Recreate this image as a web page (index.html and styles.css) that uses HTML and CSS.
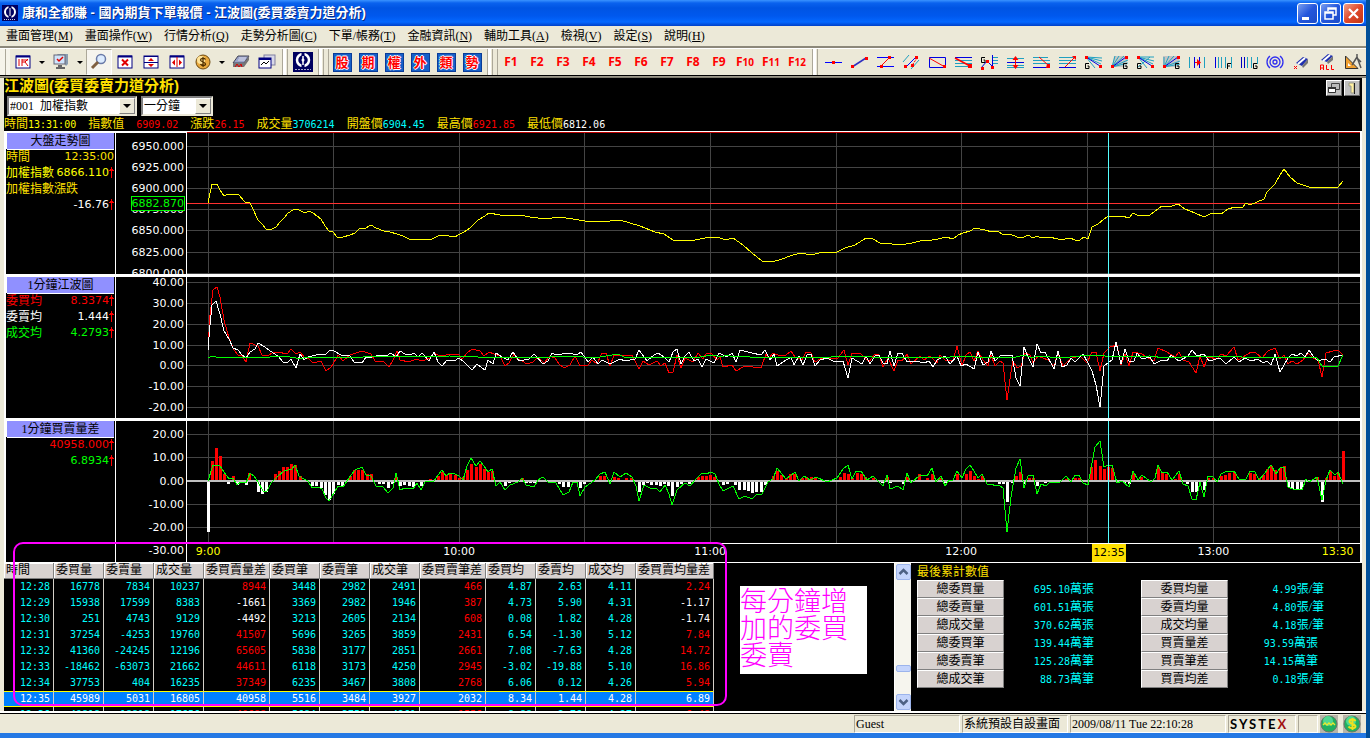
FILE: index.html
```html
<!DOCTYPE html>
<html lang="zh-Hant">
<head>
    <meta charset="UTF-8">
    <meta name="viewport" content="width=device-width, initial-scale=1.0">
    <title>康和全都賺 - 國內期貨下單報價</title>
    <link rel="stylesheet" href="styles.css">
</head>
<body>

<div class="window">
    <header class="titlebar">
        <svg class="app-icon" width="16" height="16" viewBox="0 0 16 16"><rect width="16" height="16" fill="#000060"/><circle cx="8" cy="7" r="5" fill="none" stroke="#fff" stroke-width="2"/><path d="M8 0v4M8 10v3" stroke="#000060" stroke-width="3"/><path d="M8 3v4M8 7v4" stroke="#fff"/><path d="M2 14.5h12" stroke="#ccd" stroke-dasharray="1 1"/></svg>
        <h1>康和全都賺 - 國內期貨下單報價 - 江波圖(委買委賣力道分析)</h1>
        <div class="window-buttons">
            <button aria-label="最小化"><svg width="19" height="19" viewBox="0 0 19 19"><path d="M4 14.5h7" stroke="#fff" stroke-width="3"/></svg></button>
            <button aria-label="還原"><svg width="19" height="19" viewBox="0 0 19 19"><path d="M7 7V4h8v7h-3M7 5h8M4 8h8v7H4zM4 9h8" fill="none" stroke="#fff" stroke-width="1.5"/></svg></button>
            <button class="close" aria-label="關閉"><svg width="19" height="19" viewBox="0 0 19 19"><path d="M5 5l9 9M14 5l-9 9" stroke="#fff" stroke-width="2.2"/></svg></button>
        </div>
    </header>

    <nav class="menu">
        <a href="#">畫面管理(<u>M</u>)</a>
        <a href="#">畫面操作(<u>W</u>)</a>
        <a href="#">行情分析(<u>Q</u>)</a>
        <a href="#">走勢分析圖(<u>C</u>)</a>
        <a href="#">下單/帳務(<u>T</u>)</a>
        <a href="#">金融資訊(<u>N</u>)</a>
        <a href="#">輔助工具(<u>A</u>)</a>
        <a href="#">檢視(<u>V</u>)</a>
        <a href="#">設定(<u>S</u>)</a>
        <a href="#">說明(<u>H</u>)</a>
    </nav>

    <div class="toolbar">
        <span class="grip slim first"></span>
        <button class="tool" aria-label="版面"><svg width="18" height="18" viewBox="0 0 18 18"><rect x="2" y="3" width="14" height="12" fill="#fff" stroke="#000080"/><path d="M2 3.5h14" stroke="#000080" stroke-width="2"/><path d="M5 6v7M8 6v7M8 9h3l3 4M11 9l3-3M8 7h6" stroke="#e00000" fill="none"/></svg></button>
        <button class="arrow" aria-label="版面選單"></button>
        <button class="tool" aria-label="電腦"><svg width="18" height="18" viewBox="0 0 18 18"><path d="M5 1h11v10l-2 2z" fill="#8a9cb0"/><rect x="2" y="2" width="11" height="9" fill="#cfe4fb" stroke="#667"/><path d="M5 6l2 2 4-4" stroke="#e00000" fill="none" stroke-width="1.5"/><path d="M6 12h4v2h3v2H4v-2h2z" fill="#666"/></svg></button>
        <button class="arrow" aria-label="電腦選單"></button>
        <button class="tool pressed" aria-label="查詢"><svg width="18" height="18" viewBox="0 0 18 18"><circle cx="11" cy="6" r="4.5" fill="#dcebff" stroke="#6a7aa8" stroke-width="1.5"/><path d="M8 9l-6 6" stroke="#806040" stroke-width="3"/></svg></button>
        <button class="tool" aria-label="關閉畫面"><svg width="18" height="18" viewBox="0 0 18 18"><rect x="2" y="3" width="14" height="12" fill="#fff" stroke="#000080"/><path d="M2 3.5h14" stroke="#000080" stroke-width="2"/><path d="M6 6.5l6 6M12 6.5l-6 6" stroke="#e00000" stroke-width="2"/></svg></button>
        <button class="tool" aria-label="水平分割"><svg width="18" height="18" viewBox="0 0 18 18"><rect x="2" y="3" width="14" height="12" fill="#fff" stroke="#000080"/><path d="M2 3.5h14M2 9.5h14" stroke="#000080"/><path d="M9 5l3 3H6zM9 14l3-3H6z" fill="#e00000"/></svg></button>
        <button class="tool" aria-label="垂直分割"><svg width="18" height="18" viewBox="0 0 18 18"><rect x="2" y="3" width="14" height="12" fill="#fff" stroke="#000080"/><path d="M2 3.5h14" stroke="#000080" stroke-width="2"/><path d="M9 4v10" stroke="#e00000"/><path d="M4 9.5l3-3v6zM14 9.5l-3-3v6z" fill="#e00000"/></svg></button>
        <button class="tool" aria-label="帳務"><svg width="18" height="18" viewBox="0 0 18 18"><circle cx="9" cy="9" r="7" fill="#e8a83c" stroke="#6e4a10"/><circle cx="7" cy="7" r="4" fill="#ffe49a"/><path d="M11.5 6.5c-1-1.5-5-1.5-5 .5s5 2 5 4-4 2-5 0M9 4v10" stroke="#503000" fill="none" stroke-width="1.3"/></svg></button>
        <button class="arrow" aria-label="帳務選單"></button>
        <button class="tool" aria-label="列印"><svg width="18" height="18" viewBox="0 0 18 18"><path d="M6 3h11l-5 7H1z" fill="#9aa4c8" stroke="#445"/><path d="M1 10h11l5-7v4l-5 7H1z" fill="#777"/><path d="M7 5h7M6 7h7" stroke="#dde"/><path d="M3 14l2-3 2 3 2-3 1 3" stroke="#e00000" fill="none"/></svg></button>
        <button class="tool" aria-label="走勢視窗"><svg width="18" height="18" viewBox="0 0 18 18"><rect x="6" y="2" width="11" height="10" fill="#d8d8e8" stroke="#8080a0"/><rect x="1" y="5" width="12" height="10" fill="#fff" stroke="#000080"/><path d="M1 6h12" stroke="#000080" stroke-width="2"/><path d="M3 12l3-3 2 2 3-3" stroke="#000" fill="none"/></svg></button>

        <span class="grip slim"></span>
        <button class="tool" aria-label="康和"><svg width="20" height="20" viewBox="0 0 20 20"><rect width="20" height="20" fill="#000060"/><circle cx="10" cy="8" r="6" fill="none" stroke="#fff" stroke-width="2.5"/><path d="M10 0v4M10 12v4" stroke="#000060" stroke-width="3"/><path d="M10 4v3M10 9v4" stroke="#fff" stroke-width="1.5"/><circle cx="10" cy="8" r="1.5" fill="#fff"/><path d="M2 17.5h16" stroke="#aac" stroke-dasharray="2 1"/></svg></button>

        <span class="grip"></span>
        <button class="tool word"><span>股</span></button>
        <button class="tool word"><span>期</span></button>
        <button class="tool word"><span>權</span></button>
        <button class="tool word"><span>外</span></button>
        <button class="tool word"><span>類</span></button>
        <button class="tool word"><span>勢</span></button>

        <span class="grip"></span>
        <button class="tool fkey">F1</button>
        <button class="tool fkey">F2</button>
        <button class="tool fkey">F3</button>
        <button class="tool fkey">F4</button>
        <button class="tool fkey">F5</button>
        <button class="tool fkey">F6</button>
        <button class="tool fkey">F7</button>
        <button class="tool fkey">F8</button>
        <button class="tool fkey">F9</button>
        <button class="tool fkey">F<small>10</small></button>
        <button class="tool fkey">F<small>11</small></button>
        <button class="tool fkey">F<small>12</small></button>

        <span class="grip slim"></span>
        <button class="tool" aria-label="水平線"><svg width="18" height="18" viewBox="0 0 18 18"><path d="M1 9.5h17" stroke="#0000ff"/><path d="M8 8h3v3H8z" fill="#f00"/></svg></button>
        <button class="tool" aria-label="趨勢線"><svg width="18" height="18" viewBox="0 0 18 18"><path d="M2 14L16 5" stroke="#3030c0" stroke-width="1.5"/><path d="M1 12h3v3H1zM15 4h3v3h-3z" fill="#f00"/></svg></button>
        <button class="tool" aria-label="通道線"><svg width="18" height="18" viewBox="0 0 18 18"><path d="M1 4.5h17M1 13.5h17" stroke="#0000ff"/><path d="M5 13L13 5" stroke="#f00"/><path d="M4 12h3v3H4zM12 3h3v3h-3z" fill="#f00"/></svg></button>
        <button class="tool" aria-label="平行線"><svg width="18" height="18" viewBox="0 0 18 18"><path d="M1 9l6-7M9 16l8-9" stroke="#20a0c0"/><path d="M4 14L14 4" stroke="#0000ff"/><path d="M9 14l6-9" stroke="#f00" stroke-dasharray="2 1"/><path d="M2 12h3v3H2zM13 3h3v3h-3zM9 11h3v3H9z" fill="#f00"/></svg></button>
        <button class="tool" aria-label="矩形"><svg width="18" height="18" viewBox="0 0 18 18"><path d="M1.5 4.5h16v10h-16z" fill="none" stroke="#0000e0"/><path d="M1 5l16 9" stroke="#f00"/><path d="M15 12h3v3h-3z" fill="#f00"/></svg></button>
        <button class="tool" aria-label="黃金分割"><svg width="18" height="18" viewBox="0 0 18 18"><path d="M1 4.5h17" stroke="#0000e0"/><path d="M1 7.5h17M1 10.5h17M1 13.5h17" stroke="#20a0c0"/><path d="M1 5l15 8" stroke="#f00" stroke-width="1.5"/><path d="M14 11h4v4h-4z" fill="#f00"/></svg></button>
        <button class="tool" aria-label="甘氏線"><svg width="18" height="18" viewBox="0 0 18 18"><path d="M12 4.5h6M12 7.5h6M12 10.5h6" stroke="#20a0c0"/><path d="M12.5 2v12M1 15l6-7 6 6" stroke="#0000e0" fill="none"/><path d="M5 4.500H1.500v5H5V7H3.500" stroke="#000" fill="none"/><path d="M1 14h3v3H1zM6 7h3v3H6zM11 13h3v3h-3z" fill="#f00"/></svg></button>
        <button class="tool" aria-label="等分線"><svg width="18" height="18" viewBox="0 0 18 18"><path d="M1 5.5h17M1 12.5h17M1 14.5h17" stroke="#20a0c0"/><path d="M1 9.5h17" stroke="#0000e0"/><path d="M9.5 5v9" stroke="#f00"/><path d="M9.5 3l3 4h-6zM9.5 16l3-4h-6z" fill="#f00"/></svg></button>
        <button class="tool" aria-label="下降線"><svg width="18" height="18" viewBox="0 0 18 18"><path d="M1 4.5h15M1 7.5h17M1 10.5h17" stroke="#20a0c0"/><path d="M1 14.5h17" stroke="#0000e0"/><path d="M7 4l9 8" stroke="#f00"/><path d="M15 11h3v4h-4z" fill="#f00"/></svg></button>
        <button class="tool" aria-label="上升線"><svg width="18" height="18" viewBox="0 0 18 18"><path d="M1 4.5h15M1 7.5h17M1 10.5h17" stroke="#20a0c0"/><path d="M1 14.5h17" stroke="#0000e0"/><path d="M7 14l9-9" stroke="#f00"/><path d="M14 3h4v4z" fill="#f00"/></svg></button>
        <button class="tool" aria-label="扇形線一"><svg width="18" height="18" viewBox="0 0 18 18"><path d="M2 4l16 1M2 4l16 4M2 4l15 7M2 4l9 11" stroke="#20a0c0"/><path d="M2 4l14 9" stroke="#0000e0"/><path d="M1 3h3v3H1zM15 12h3v3h-3z" fill="#f00"/><path d="M5 10.5H1.500v5H5V13H3.500" stroke="#000" fill="none"/></svg></button>
        <button class="tool" aria-label="扇形線二"><svg width="18" height="18" viewBox="0 0 18 18"><path d="M4 3h13v11H2z" fill="#c4c8c4"/><path d="M2 14l3-11M2 14L9 3M2 14L14 3M2 14l16-4M2 14l16-7" stroke="#20a0c0"/><path d="M2 14L16 4" stroke="#0000e0"/><path d="M1 12h3v3H1zM15 3h3v3h-3z" fill="#f00"/><path d="M17 10.5h-3.500v5H17V13h-2" stroke="#000" fill="none"/></svg></button>
        <button class="tool" aria-label="扇形線三"><svg width="18" height="18" viewBox="0 0 18 18"><path d="M2 4h16M2 4l16 4M2 4l15 7M2 4l9 11M2 14L14 4" stroke="#20a0c0"/><path d="M2 4l14 9" stroke="#0000e0"/><path d="M1 3h3v3H1zM15 12h3v3h-3z" fill="#f00"/><path d="M5 10.5H1.500v5H5V13H3.500" stroke="#000" fill="none"/></svg></button>
        <button class="tool" aria-label="扇形線四"><svg width="18" height="18" viewBox="0 0 18 18"><path d="M1 3h16v11H1z" fill="#c4c4c4"/><path d="M2 14V4M2 14L7 3M2 14L12 3M2 14l16-3M2 14l16-6" stroke="#20a0c0"/><path d="M2 14L16 4" stroke="#0000e0"/><path d="M1 12h3v3H1zM15 3h3v3h-3z" fill="#f00"/><path d="M17 10.5h-3.500v5H17V13h-2" stroke="#000" fill="none"/></svg></button>
        <button class="tool" aria-label="週期線"><svg width="18" height="18" viewBox="0 0 18 18"><path d="M1.5 4v11M16.5 4v11" stroke="#20a0c0"/><path d="M6.5 4v11M11.5 4v11" stroke="#0000e0"/><path d="M7 9.5h5" stroke="#f00"/><path d="M9 6l4 3.500-4 3.500z" fill="#f00"/></svg></button>
        <button class="tool" aria-label="費氏週期"><svg width="18" height="18" viewBox="0 0 18 18"><path d="M1.5 4v11" stroke="#0000e0"/><path d="M4.5 4v11M7.5 4v11M11.5 4v11M17.5 4v11" stroke="#20a0c0"/><path d="M13.5 16v-5.500H17M13.5 13H16" stroke="#000" fill="none"/></svg></button>
        <button class="tool" aria-label="甘氏週期"><svg width="18" height="18" viewBox="0 0 18 18"><path d="M1.5 4v11M4.5 4v11" stroke="#0000c0"/><path d="M7.5 4v11M11.5 4v11M17.5 4v7" stroke="#20a0c0"/><path d="M17 10.5h-3.500v5H17V13h-2" stroke="#000" fill="none"/></svg></button>
        <button class="tool" aria-label="圓弧"><svg width="18" height="18" viewBox="0 0 18 18"><g fill="none" stroke="#3030f0" stroke-width="1.3"><circle cx="9" cy="9" r="2"/><circle cx="9" cy="9" r="5"/><path d="M4 3c-4 3-4 9 0 12M14 3c4 3 4 9 0 12"/></g></svg></button>
        <button class="tool" aria-label="刪除線"><svg width="18" height="18" viewBox="0 0 18 18"><path d="M4 10l7-6 5 2-6 7z" fill="#2030b0"/><path d="M6 11l7-6" stroke="#fff" stroke-width="2"/><path d="M10 13l6-7v4l-5 5z" fill="#777"/><path d="M2 13l3 3M5 13l-3 3" stroke="#f00"/></svg></button>
        <button class="tool" aria-label="全部刪除"><svg width="18" height="18" viewBox="0 0 18 18"><path d="M3 7l7-6 5 2-6 6z" fill="#2030b0"/><path d="M5 8l7-6" stroke="#fff" stroke-width="2"/><path d="M9 9l6-6v4l-5 4z" fill="#777"/><path d="M2.5 17v-5h3v5M2.5 15h3M8.5 12v4.500H11M13.5 12v4.500H16" stroke="#f00" fill="none"/></svg></button>
        <button class="tool" aria-label="繪圖工具"><svg width="18" height="18" viewBox="0 0 18 18"><path d="M1.5 3v12.500H14z" fill="#f0a030" stroke="#333"/><path d="M4 10v3h3z" fill="#fff"/><path d="M8 12l5-8 4 11M13 4V1M17 9l-4-4" stroke="#555" fill="none" stroke-width="1.5"/></svg></button>
    </div>

    <main class="analysis">
        <section class="panel-head">
            <div class="panel-title">
                <h2>江波圖(委買委賣力道分析)</h2>
                <div class="panel-buttons">
                    <button aria-label="視窗"><svg width="14" height="14" viewBox="0 0 14 14"><path d="M4.500 2.500h8v6h-8z" fill="#bbb" stroke="#444"/><path d="M1.500 6.500h7v5h-7z" fill="#fff" stroke="#333"/><path d="M1 7h8" stroke="#333" stroke-width="2"/></svg></button>
                    <button aria-label="頁籤"><svg width="14" height="14" viewBox="0 0 14 14"><path d="M4 2h5v10H6V5H4z" fill="#fff0a0" stroke="#998"/><path d="M9.5 2v11" stroke="#222"/></svg></button>
                </div>
            </div>
            <div class="filters">
                <label class="combo symbol">
                    <select aria-label="商品"><option>#001&nbsp; 加權指數</option></select>
                    <span class="combo-arrow"></span>
                </label>
                <label class="combo period">
                    <select aria-label="週期"><option>一分鐘</option></select>
                    <span class="combo-arrow"></span>
                </label>
            </div>
            <div class="quote">
                <span>時間<b class="yellow">13:31:00</b></span>
                <span>指數值</span>
                <span><b class="red">6909.02</b></span>
                <span>漲跌<b class="red">26.15</b></span>
                <span>成交量<b class="cyan">3706214</b></span>
                <span>開盤價<b class="cyan">6904.45</b></span>
                <span>最高價<b class="red">6921.85</b></span>
                <span>最低價<b class="white">6812.06</b></span>
            </div>
        </section>

        <section class="charts">
            <div class="chart">
                <div class="legend">
                    <h3>大盤走勢圖</h3>
                    <p class="gold"><span>時間</span><b>12:35:00</b></p>
                    <p class="yellow"><span>加權指數</span><b>6866.110<i class="up"></i></b></p>
                    <p class="gold"><span>加權指數漲跌</span></p>
                    <p class="white"><b>-16.76<i class="up"></i></b></p>
                </div>
                <svg class="scale" width="70" height="141">
                    <text x="68" y="17">6950.000</text>
                    <text x="68" y="38">6925.000</text>
                    <text x="68" y="59">6900.000</text>
                    <text x="68" y="80">6875.000</text>
                    <text x="68" y="101">6850.000</text>
                    <text x="68" y="123">6825.000</text>
                    <text x="68" y="144">6800.000</text>
                    <rect x="15.5" y="63.5" width="53" height="14" fill="#000" stroke="#0f0"/>
                    <text x="68" y="74" class="current">6882.870</text>
                </svg>
                <svg class="plot" viewBox="187 133 1173 141" preserveAspectRatio="none">
                    <path class="grid" d="M187 146.5H1360M187 167.5H1360M187 188.5H1360M187 209.5H1360M187 230.5H1360M187 252.5H1360M187 273.5H1360M208.5 133V274M333.5 133V274M459.5 133V274M584.5 133V274M710.5 133V274M836.5 133V274M961.5 133V274M1087.5 133V274M1213.5 133V274M1338.5 133V274"/>
                    <path stroke="#ff3030" d="M187 203.5H1360"/>
                    <polyline stroke="#ffff00" points="208,203 212,184 217,184 220,190 224,196 228,194 238,194 245,202 250,203 253,209 258,220 262,224 266,229 272,229 276,227 280,222 285,217 288,213 293,210 297,209 301,211 305,213 309,211 313,213 317,216 321,219 325,226 329,231 333,232 337,237 343,237 350,235 355,233 359,229 366,228 371,225 376,228 384,231 390,232 397,234 403,236 409,239 421,240 432,239 438,236 442,235 455,237 460,234 464,232 470,228 478,220 485,216 489,213 500,215 520,215 530,217 545,219 560,217 585,221 600,222 620,220 640,226 655,232 664,234 673,240 690,241 700,239 710,237 718,237 725,240 733,238 743,245 752,253 762,261 772,262 782,259 790,256 800,253 812,255 822,252 835,253 845,248 855,245 866,238 873,239 880,243 892,244 900,245 912,243 920,241 932,240 938,239 946,237 953,239 958,235 963,233 970,231 975,228 985,230 992,232 998,231 1003,235 1010,234 1017,237 1024,237 1028,235 1033,238 1037,236 1041,238 1049,237 1058,239 1065,239 1070,238 1075,240 1080,240 1084,237 1088,239 1092,227 1098,224 1104,219 1109,216 1122,216 1129,218 1133,213 1137,215 1150,215 1155,211 1162,206 1172,206 1178,204 1185,209 1195,213 1204,217 1212,213 1221,214 1228,209 1235,207 1242,208 1246,203 1250,205 1257,202 1264,199 1267,192 1275,184 1280,175 1284,169 1290,177 1297,183 1309,187 1338,187 1343,181"/>
                    <path class="cursor" d="M1108.5 133V274"/>
                </svg>
            </div>

            <div class="chart">
                <div class="legend">
                    <h3>1分鐘江波圖</h3>
                    <p class="red"><span>委買均</span><b>8.3374<i class="up"></i></b></p>
                    <p class="white"><span>委賣均</span><b>1.444<i class="up"></i></b></p>
                    <p class="green"><span>成交均</span><b>4.2793<i class="up"></i></b></p>
                </div>
                <svg class="scale" width="70" height="141">
                    <text x="68" y="9">40.00</text>
                    <text x="68" y="30">30.00</text>
                    <text x="68" y="51">20.00</text>
                    <text x="68" y="72">10.00</text>
                    <text x="68" y="92">0.00</text>
                    <text x="68" y="113">-10.00</text>
                    <text x="68" y="134">-20.00</text>
                </svg>
                <svg class="plot" viewBox="187 277 1173 141" preserveAspectRatio="none">
                    <path class="grid" d="M187 282.5H1360M187 303.5H1360M187 324.5H1360M187 345.5H1360M187 365.5H1360M187 386.5H1360M187 407.5H1360M208.5 277V418M333.5 277V418M459.5 277V418M584.5 277V418M710.5 277V418M836.5 277V418M961.5 277V418M1087.5 277V418M1213.5 277V418M1338.5 277V418"/>
                    <polyline stroke="#ff0000" points="208,350 210,315 213,290 217,287 220,297 224,320 229,338 234,350 238,355 242,356 246,362 250,343 258,346 262,355 268,356 272,353 278,352 287,354 291,349 296,354 300,352 305,358 308,358 313,363 321,361 326,371 331,367 336,359 338,355 343,361 350,355 356,353 362,351 371,354 375,361 384,362 389,367 393,360 397,351 400,360 409,362 416,359 422,361 430,358 434,353 440,356 453,354 459,355 462,359 467,353 472,349 480,351 484,356 489,352 494,354 500,356 505,366 509,363 514,354 517,359 522,361 527,364 533,362 538,357 544,363 550,356 555,358 559,364 564,368 570,365 575,356 580,366 588,365 592,360 597,364 602,353 606,353 610,366 614,355 622,356 632,355 639,369 643,361 649,365 657,361 661,366 665,363 669,373 673,372 677,355 681,368 685,358 693,362 698,353 703,359 706,354 711,353 717,360 720,357 723,367 732,365 736,371 745,366 753,367 761,368 766,354 769,358 773,353 780,356 786,355 791,351 795,357 802,360 806,352 811,353 815,362 820,359 827,358 838,358 844,350 848,365 852,353 861,354 869,362 875,354 879,355 883,367 888,358 894,371 898,360 902,361 907,354 911,364 920,356 924,360 930,356 937,363 940,355 945,360 953,361 957,346 962,366 966,355 970,352 974,361 978,351 983,360 988,366 991,355 995,366 1000,361 1003,363 1007,400 1011,372 1013,361 1017,368 1021,366 1025,353 1030,355 1033,363 1038,356 1048,360 1054,366 1058,353 1063,366 1068,361 1072,358 1080,356 1087,363 1092,352 1096,352 1100,371 1104,353 1110,347 1117,345 1121,365 1125,354 1129,366 1133,352 1142,354 1148,358 1154,361 1158,348 1167,352 1175,357 1179,352 1183,360 1189,362 1196,373 1200,356 1204,367 1208,357 1217,359 1221,354 1226,356 1234,347 1238,360 1243,357 1251,352 1256,353 1262,358 1268,351 1275,348 1280,359 1284,355 1288,364 1292,361 1297,364 1303,360 1308,353 1313,358 1318,360 1322,377 1326,353 1333,351 1338,350 1343,355"/>
                    <polyline stroke="#ffffff" points="208,350 210,325 212,305 216,301 220,314 224,331 229,339 233,348 238,350 242,355 246,358 250,352 255,349 258,343 265,347 273,353 278,356 283,362 287,363 291,359 296,368 300,354 304,360 308,357 316,355 322,354 325,355 330,350 334,351 341,355 350,356 354,362 362,363 366,357 372,357 380,355 386,356 391,353 396,357 400,351 405,354 410,355 414,353 418,357 422,353 429,361 434,352 438,362 442,366 447,360 454,361 459,358 464,362 472,370 477,364 485,370 488,360 493,364 496,353 502,357 508,360 513,352 519,361 529,359 534,354 543,364 548,361 552,353 556,355 569,353 577,355 581,352 588,362 593,357 598,364 602,360 610,364 620,359 625,361 635,359 639,350 647,361 654,355 658,353 664,357 669,362 673,352 677,349 681,364 685,356 689,352 694,361 698,359 702,367 706,359 714,363 719,353 727,357 732,353 736,362 740,350 752,353 761,355 765,350 770,360 774,354 777,366 783,362 791,357 794,365 799,356 803,365 807,355 811,354 815,366 820,360 827,358 835,362 843,361 848,378 852,358 862,364 866,356 870,364 875,356 879,355 883,363 887,364 890,351 894,366 898,353 902,353 907,362 913,361 920,362 924,363 929,361 933,367 937,360 945,356 950,364 957,356 961,366 966,364 974,369 978,352 983,365 988,362 991,351 995,361 1000,356 1012,355 1016,378 1020,386 1024,347 1028,357 1033,367 1037,344 1041,353 1045,352 1054,369 1058,351 1062,367 1067,365 1071,358 1075,362 1083,354 1088,363 1092,371 1096,385 1100,407 1104,366 1109,362 1112,360 1116,342 1121,364 1125,349 1129,361 1134,361 1137,353 1142,359 1150,357 1154,364 1162,360 1167,361 1171,355 1179,361 1188,356 1192,350 1197,356 1204,354 1209,361 1220,358 1226,364 1234,357 1239,362 1245,358 1251,361 1258,359 1263,363 1267,361 1271,365 1275,354 1280,372 1288,358 1292,354 1297,356 1301,353 1305,357 1309,350 1313,356 1318,361 1325,359 1330,362 1334,357 1343,355"/>
                    <polyline stroke="#00ff00" points="208,358 212,356 216,357 243,357 246,358 250,357 270,357 276,356 290,357 296,358 303,358 312,357 350,357 358,358 368,356 376,357 450,356 460,357 472,356 484,358 500,357 550,357 563,356 576,356 590,358 600,357 618,354 624,357 700,357 712,355 722,357 726,355 734,357 742,356 750,357 815,357 822,358 840,356 860,356 884,358 890,357 920,357 950,357 970,356 980,358 1000,357 1016,357 1024,355 1033,358 1037,356 1050,357 1060,358 1080,356 1100,355 1110,357 1150,356 1165,358 1200,356 1233,356 1250,358 1265,357 1290,357 1317,358 1322,366 1338,366 1343,355"/>
                    <path class="cursor" d="M1108.5 277V418"/>
                </svg>
            </div>

            <div class="chart">
                <div class="legend">
                    <h3>1分鐘買賣量差</h3>
                    <p class="red"><b>40958.000<i class="up"></i></b></p>
                    <p class="green"><b>6.8934<i class="up"></i></b></p>
                </div>
                <svg class="scale" width="70" height="141">
                    <text x="68" y="17">20.00</text>
                    <text x="68" y="40">10.00</text>
                    <text x="68" y="64">0.00</text>
                    <text x="68" y="87">-10.00</text>
                    <text x="68" y="110">-20.00</text>
                    <text x="68" y="133">-30.00</text>
                </svg>
                <div class="plot-with-time">
                    <svg class="plot" viewBox="187 421 1173 122" preserveAspectRatio="none">
                        <path class="grid" d="M187 434.5H1360M187 457.5H1360M187 504.5H1360M187 527.5H1360M208.5 421V543M333.5 421V543M459.5 421V543M584.5 421V543M710.5 421V543M836.5 421V543M961.5 421V543M1087.5 421V543M1213.5 421V543M1338.5 421V543"/>
                        <path class="bars" stroke="#ff0000" d="M212.5 481V461M216.5 481V448M220.5 481V456M224.5 481V474M233.5 481V476M249.5 481V473M275.5 481V474M279.5 481V471M283.5 481V467M287.5 481V467M291.5 481V464M295.5 481V465M300.5 481V476M350.5 481V476M354.5 481V470M358.5 481V470M362.5 481V470M367.5 481V474M371.5 481V474M396.5 481V477M430.5 481V479M438.5 481V476M442.5 481V472M446.5 481V475M450.5 481V474M455.5 481V475M459.5 481V478M463.5 481V477M467.5 481V470M471.5 481V464M476.5 481V467M480.5 481V464M484.5 481V469M488.5 481V472M492.5 481V471M522.5 481V478M600.5 481V476M604.5 481V476M614.5 481V477M618.5 481V478M626.5 481V478M631.5 481V478M698.5 481V477M702.5 481V476M706.5 481V476M710.5 481V475M714.5 481V477M773.5 481V476M777.5 481V471M781.5 481V475M786.5 481V478M790.5 481V474M794.5 481V474M802.5 481V478M806.5 481V477M811.5 481V477M815.5 481V477M840.5 481V477M844.5 481V473M848.5 481V474M852.5 481V478M857.5 481V473M861.5 481V474M865.5 481V477M873.5 481V478M887.5 481V477M907.5 481V477M919.5 481V474M927.5 481V478M932.5 481V474M940.5 481V478M957.5 481V474M966.5 481V474M970.5 481V471M974.5 481V476M978.5 481V479M982.5 481V476M1016.5 481V476M1020.5 481V472M1029.5 481V478M1033.5 481V478M1066.5 481V479M1075.5 481V478M1079.5 481V478M1091.5 481V467M1095.5 481V460M1100.5 481V466M1104.5 481V469M1108.5 481V467M1112.5 481V468M1133.5 481V473M1141.5 481V477M1158.5 481V467M1162.5 481V473M1166.5 481V474M1175.5 481V479M1179.5 481V474M1208.5 481V478M1213.5 481V478M1221.5 481V476M1225.5 481V475M1229.5 481V473M1234.5 481V472M1250.5 481V473M1254.5 481V474M1259.5 481V478M1263.5 481V475M1267.5 481V469M1271.5 481V466M1275.5 481V470M1280.5 481V468M1284.5 481V466M1317.5 481V477M1326.5 481V478M1330.5 481V471M1334.5 481V476M1338.5 481V473M1343.5 481V451"/>
                        <path class="bars" stroke="#ffffff" d="M208.5 481V532M228.5 481V484M237.5 481V485M246.5 481V485M258.5 481V492M262.5 481V494M266.5 481V492M312.5 481V486M316.5 481V486M321.5 481V488M325.5 481V495M329.5 481V500M333.5 481V494M338.5 481V485M342.5 481V486M379.5 481V484M383.5 481V484M388.5 481V488M392.5 481V484M400.5 481V486M404.5 481V485M409.5 481V486M413.5 481V487M421.5 481V486M505.5 481V486M509.5 481V483M526.5 481V483M530.5 481V483M534.5 481V483M559.5 481V484M563.5 481V487M568.5 481V487M580.5 481V488M584.5 481V484M639.5 481V492M643.5 481V485M647.5 481V483M651.5 481V485M656.5 481V485M660.5 481V486M664.5 481V484M668.5 481V486M672.5 481V496M677.5 481V487M681.5 481V484M689.5 481V484M723.5 481V485M727.5 481V484M735.5 481V485M739.5 481V490M744.5 481V490M748.5 481V491M752.5 481V493M756.5 481V492M761.5 481V492M765.5 481V485M882.5 481V483M890.5 481V483M903.5 481V484M945.5 481V483M999.5 481V484M1003.5 481V484M1007.5 481V502M1012.5 481V483M1024.5 481V484M1037.5 481V486M1045.5 481V483M1124.5 481V483M1129.5 481V484M1187.5 481V484M1192.5 481V492M1196.5 481V492M1204.5 481V490M1288.5 481V487M1292.5 481V489M1297.5 481V490M1301.5 481V490M1322.5 481V502"/>
                        <path class="zero" d="M187 481H1360"/>
                        <polyline stroke="#00ff00" points="208,481 213,465 220,466 224,472 229,479 233,478 237,485 241,482 246,483 250,473 254,476 258,482 263,491 267,491 271,483 277,477 284,471 292,469 295,465 299,476 304,479 308,481 312,488 318,487 322,489 326,498 329,501 334,493 338,486 343,487 347,481 351,475 355,470 362,467 366,475 371,476 376,486 383,487 388,493 393,488 396,473 400,490 405,488 413,489 417,483 421,490 425,482 430,481 434,481 438,475 442,470 446,476 450,473 455,474 459,476 463,480 467,466 471,458 476,466 480,461 484,466 488,472 492,469 496,486 500,482 505,490 510,485 518,482 522,478 526,485 534,487 538,480 543,477 548,482 556,483 563,495 569,492 573,482 577,482 580,496 585,487 595,480 600,474 605,472 610,484 614,472 620,477 626,473 632,477 636,486 639,501 644,485 650,488 656,488 660,492 665,485 669,494 672,505 677,490 685,483 690,486 695,480 702,473 706,474 711,472 715,474 719,484 723,491 733,486 739,499 745,496 752,499 757,494 762,494 768,482 773,479 777,468 786,479 795,472 799,481 804,476 810,480 816,477 827,482 837,478 843,469 848,465 852,479 856,471 861,471 867,480 873,476 883,486 887,475 890,489 898,486 903,490 907,473 911,483 920,475 927,476 932,468 936,482 941,476 945,486 949,480 953,480 957,471 962,478 966,469 970,465 974,471 978,478 982,474 987,484 1000,486 1003,488 1007,532 1011,497 1016,468 1020,459 1024,488 1028,476 1033,475 1037,494 1041,484 1046,486 1050,482 1060,482 1066,476 1071,482 1075,475 1079,475 1083,483 1088,485 1092,463 1095,447 1100,441 1104,467 1108,465 1112,465 1117,483 1122,481 1129,487 1133,471 1138,480 1142,475 1151,482 1155,478 1158,465 1162,473 1167,472 1172,480 1179,471 1183,484 1188,486 1192,499 1196,500 1200,482 1204,497 1208,476 1213,477 1217,482 1221,474 1227,471 1234,471 1239,479 1246,479 1250,471 1255,472 1259,480 1264,474 1271,465 1276,474 1280,468 1284,467 1288,487 1293,489 1302,490 1306,479 1309,482 1317,477 1322,500 1326,480 1330,470 1335,475 1338,472 1343,484"/>
                        <path class="cursor" d="M1108.5 421V543"/>
                    </svg>
                    <svg class="time-axis" height="18">
                        <text x="1.8%" y="11" class="edge">9:00</text>
                        <text x="23.2%" y="11">10:00</text>
                        <text x="44.6%" y="11">11:00</text>
                        <text x="66%" y="11">12:00</text>
                        <rect x="77.15%" width="34" height="18" fill="#ffe000"/>
                        <text x="78.6%" y="12" class="selected">12:35</text>
                        <text x="87.5%" y="11">13:00</text>
                        <text x="98.1%" y="11" class="edge">13:30</text>
                    </svg>
                </div>
            </div>
        </section>

        <section class="bottom">
            <div class="minutes">
                <table>
                    <thead>
                        <tr><th>時間</th><th>委買量</th><th>委賣量</th><th>成交量</th><th class="mid">委買賣量差</th><th>委買筆</th><th>委賣筆</th><th>成交筆</th><th class="mid">委買賣筆差</th><th>委買均</th><th>委賣均</th><th>成交均</th><th class="wide">委買賣均量差</th></tr>
                    </thead>
                    <tbody>
                        <tr><td>12:28</td><td>16778</td><td>7834</td><td>10237</td><td class="red">8944</td><td>3448</td><td>2982</td><td>2491</td><td class="red">466</td><td>4.87</td><td>2.63</td><td>4.11</td><td class="red">2.24</td></tr>
                        <tr><td>12:29</td><td>15938</td><td>17599</td><td>8383</td><td class="white">-1661</td><td>3369</td><td>2982</td><td>1946</td><td class="red">387</td><td>4.73</td><td>5.90</td><td>4.31</td><td class="white">-1.17</td></tr>
                        <tr><td>12:30</td><td>251</td><td>4743</td><td>9129</td><td class="white">-4492</td><td>3213</td><td>2605</td><td>2134</td><td class="red">608</td><td>0.08</td><td>1.82</td><td>4.28</td><td class="white">-1.74</td></tr>
                        <tr><td>12:31</td><td>37254</td><td>-4253</td><td>19760</td><td class="red">41507</td><td>5696</td><td>3265</td><td>3859</td><td class="red">2431</td><td>6.54</td><td>-1.30</td><td>5.12</td><td class="red">7.84</td></tr>
                        <tr><td>12:32</td><td>41360</td><td>-24245</td><td>12196</td><td class="red">65605</td><td>5838</td><td>3177</td><td>2851</td><td class="red">2661</td><td>7.08</td><td>-7.63</td><td>4.28</td><td class="red">14.72</td></tr>
                        <tr><td>12:33</td><td>-18462</td><td>-63073</td><td>21662</td><td class="red">44611</td><td>6118</td><td>3173</td><td>4250</td><td class="red">2945</td><td>-3.02</td><td>-19.88</td><td>5.10</td><td class="red">16.86</td></tr>
                        <tr><td>12:34</td><td>37753</td><td>404</td><td>16235</td><td class="red">37349</td><td>6235</td><td>3467</td><td>3808</td><td class="red">2768</td><td>6.06</td><td>0.12</td><td>4.26</td><td class="red">5.94</td></tr>
                        <tr class="current-row"><td>12:35</td><td>45989</td><td>5031</td><td>16805</td><td>40958</td><td>5516</td><td>3484</td><td>3927</td><td>2032</td><td>8.34</td><td>1.44</td><td>4.28</td><td>6.89</td></tr>
                        <tr><td>12:36</td><td>49818</td><td>18818</td><td>17656</td><td class="red">40688</td><td>5684</td><td>3751</td><td>4261</td><td class="red">1556</td><td>8.88</td><td>2.76</td><td>4.27</td><td class="red">6.48</td></tr>
                    </tbody>
                </table>
            </div>
            <div class="scrollbar">
                <button aria-label="向上"><svg width="13" height="14" viewBox="0 0 13 14"><path d="M2.5 9l4-4 4 4" fill="none" stroke="#4d6185" stroke-width="2.5"/></svg></button>
                <span class="thumb"></span>
                <button aria-label="向下"><svg width="13" height="14" viewBox="0 0 13 14"><path d="M2.5 5l4 4 4-4" fill="none" stroke="#4d6185" stroke-width="2.5"/></svg></button>
            </div>
            <div class="summary">
                <h3>最後累計數值</h3>
                <dl>
                    <dt>總委買量</dt><dd><b>695.10</b>萬張</dd><dt>委買均量</dt><dd><b>4.99</b>張/筆</dd>
                    <dt>總委賣量</dt><dd><b>601.51</b>萬張</dd><dt>委賣均量</dt><dd><b>4.80</b>張/筆</dd>
                    <dt>總成交量</dt><dd><b>370.62</b>萬張</dd><dt>成交均量</dt><dd><b>4.18</b>張/筆</dd>
                    <dt>總委買筆</dt><dd><b>139.44</b>萬筆</dd><dt>買賣量差</dt><dd><b>93.59</b>萬張<b>&nbsp;</b></dd>
                    <dt>總委賣筆</dt><dd><b>125.28</b>萬筆</dd><dt>買賣筆差</dt><dd><b>14.15</b>萬筆<b>&nbsp;</b></dd>
                    <dt>總成交筆</dt><dd><b>88.73</b>萬筆</dd><dt>買賣均差</dt><dd><b>0.18</b>張/筆</dd>
                </dl>
            </div>
        </section>

        <!-- 註解 -->
        <div class="mark"></div>
        <p class="note">每分鐘增加的委買委賣</p>
    </main>

    <footer class="statusbar">
        <span class="cell guest">Guest</span>
        <span class="cell layout">系統預設自設畫面</span>
        <span class="cell clock">2009/08/11 Tue 22:10:28</span>
        <span class="cell brand">SYSTE<em>X</em></span>
        <span class="cell blank"></span>
        <span class="cell lamp"><svg width="18" height="18" viewBox="0 0 18 18"><rect width="18" height="18" fill="#b8b4a8"/><circle cx="9" cy="9" r="8" fill="#20b060" stroke="#687868"/><circle cx="8" cy="6" r="5" fill="#50d890"/><path d="M3 10l2-2 2 2 2-2 2 2 2-2 2 2" fill="none" stroke="#e8e830" stroke-width="1.3"/></svg></span>
        <span class="cell lamp"><svg width="18" height="18" viewBox="0 0 18 18"><rect width="18" height="18" fill="#b8b4a8"/><circle cx="9" cy="9" r="8" fill="#20b060" stroke="#687868"/><circle cx="8" cy="6" r="5" fill="#50d890"/><path d="M12.5 6c-1-2-6-2-6 .5s6 2.500 6 5-6 2-7 0M9.500 3v12" fill="none" stroke="#f0e020" stroke-width="2"/></svg></span>
    </footer>
</div>

</body>
</html>
```
FILE: styles.css
```css
* {
    box-sizing: border-box;
}

body {
    margin: 0;
    background-color: #004e98;
    color: #000;
    font: 12px/16px "Liberation Serif", "Noto Sans CJK TC", serif;
    overflow: hidden;
}

h1, h2, h3, p, dl, dd {
    margin: 0;
}

button {
    padding: 0;
    border: none;
    background: none;
    font: inherit;
}

svg {
    display: block;
}

b {
    font-weight: normal;
}

.window {
    margin-right: 4px;
    background-color: #ece9d8;
    border-bottom: 5px solid #2478e4;
    min-height: 100vh;
    display: flex;
    flex-direction: column;
}

.yellow { color: #ff0; }
.gold { color: #ffe000; }
.red { color: #f00; }
.cyan { color: #0ff; }
.white { color: #fff; }
.green { color: #0f0; }

/* Title bar */
.titlebar {
    height: 26px;
    padding: 0 2px;
    display: flex;
    align-items: center;
    gap: 4px;
    background: linear-gradient(#3a93ff 0, #0a62ee 3px, #0054e3 8px, #0058ee 16px, #0468ff 22px, #0040c8 26px);
}

.titlebar h1 {
    flex-grow: 1;
    color: #fff;
    font: bold 13px/20px "Liberation Sans", "Noto Sans CJK TC", sans-serif;
    text-shadow: 1px 1px 0 #0a2a80;
}

.window-buttons {
    display: flex;
    gap: 2px;
}

.window-buttons button {
    width: 21px;
    height: 21px;
    border: 1px solid #fff;
    border-radius: 3px;
    background: linear-gradient(135deg, #7a9ff0, #2456dc 50%, #1c4cc8);
}

.window-buttons .close {
    background: linear-gradient(135deg, #f0a088, #e0482a 50%, #c03414);
}

/* Menu */
.menu {
    height: 23px;
    padding: 2px 6px 0;
    display: flex;
    gap: 12px;
    border-bottom: 1px solid #fff;
    box-shadow: inset 0 -2px 0 #8c887a;
}

.menu a {
    color: #000;
    text-decoration: none;
    white-space: nowrap;
}

/* Toolbar */
.toolbar {
    height: 29px;
    padding-bottom: 3px;
    display: flex;
    background: linear-gradient(#ece9d8 26px, #000 26px, #000 27px, #aca899 27px, #716f64 29px);
    overflow: hidden;
}

.grip {
    flex: none;
    width: 13px;
    background:
        linear-gradient(#aca899, #aca899) 2px 0 / 1px 100% no-repeat,
        linear-gradient(#fff, #fff) 3px 0 / 2px 100% no-repeat,
        linear-gradient(#aca899, #aca899) 7px 0 / 1px 100% no-repeat,
        linear-gradient(#fff, #fff) 5px 0 / 1px 100% no-repeat,
        linear-gradient(#aca899, #aca899) 12px 0 / 1px 100% no-repeat;
}

.grip.slim {
    width: 10px;
}

.grip.first {
    background: linear-gradient(#aca899, #aca899) 5px 0 / 1px 100% no-repeat, #f6f4ea;
}

.tool {
    flex: none;
    width: 26px;
    height: 26px;
    display: flex;
    align-items: center;
    justify-content: center;
}

.tool.pressed {
    border: 1px solid #aca899;
    border-color: #aca899 #fff #fff #aca899;
    background-color: #f6f4ee;
}

.arrow {
    flex: none;
    width: 12px;
    height: 26px;
}

.arrow::after,
.combo-arrow::after {
    content: "";
    display: block;
    width: 0;
    margin: auto;
    border: 3px solid transparent;
    border-top-color: #000;
    border-bottom: none;
}

.word span {
    width: 19px;
    height: 19px;
    border: 1px solid #0a3c98;
    background-color: #1660c8;
    color: #f00;
    font: bold 13px/15px "Noto Sans CJK TC", sans-serif;
    text-shadow: 1px 0 #fff, -1px 0 #fff, 0 1px #fff, 0 -1px #fff;
}

.fkey {
    color: #f00;
    font: bold 12px/16px "Open Sans", sans-serif;
}

.fkey small {
    font-size: 10px;
}

/* Workspace */
.analysis {
    position: relative;
    margin: 0 4px;
    background-color: #000;
}

.panel-title {
    height: 17px;
    display: flex;
    justify-content: space-between;
}

.panel-title h2 {
    color: #ffe000;
    font: bold 15px/16px "Liberation Sans", "Noto Sans CJK TC", sans-serif;
}

.panel-buttons {
    display: flex;
    gap: 2px;
    padding: 2px 2px 0 0;
}

.panel-buttons button {
    width: 16px;
    height: 16px;
    border: 1px solid #fff;
    border-color: #fff #666 #666 #fff;
    background-color: #c0c0c0;
}

.filters {
    height: 21px;
    padding: 1px 3px;
    display: flex;
    gap: 4px;
}

.combo {
    position: relative;
    height: 20px;
    border: 2px solid #808080;
    border-color: #808080 #ece9d8 #ece9d8 #808080;
    background-color: #fff;
}

.combo.symbol { width: 130px; }
.combo.period { width: 72px; }

.combo select {
    appearance: none;
    width: 100%;
    height: 16px;
    padding: 0 1px;
    border: none;
    background: none;
    color: #000;
    font: 12px/16px "Liberation Serif", "Noto Sans CJK TC", serif;
}

.combo-arrow {
    position: absolute;
    top: 0;
    right: 0;
    width: 16px;
    height: 16px;
    border: 1px solid #fff;
    border-color: #fff #808080 #808080 #fff;
    background-color: #ece9d8;
    display: flex;
    pointer-events: none;
}

.combo-arrow::after {
    border-width: 4px 4px 0;
}

.quote {
    height: 15px;
    display: flex;
    gap: 12px;
    color: #ffe000;
    white-space: nowrap;
}

.quote b,
.summary b,
.minutes td {
    font-family: "DejaVu Sans Mono", monospace;
    font-size: 10px;
}

/* Charts */
.charts {
    padding: 2px 2px 1px;
    background-color: #fff;
    display: flex;
    flex-direction: column;
    gap: 3px;
}

.chart {
    display: grid;
    grid-template-columns: 109px 70px 1fr;
    column-gap: 1px;
    height: 141px;
}

.chart:first-child .plot {
    box-shadow: 0 -1px 0 #c00000;
}

.legend {
    min-width: 0;
    background-color: #000;
}

.legend h3 {
    height: 16px;
    margin: 0 1px;
    background-color: #9090ff;
    box-shadow: -1px 0 0 #fff, 0 1px 0 #fff;
    font-size: 12px;
    font-weight: normal;
    line-height: 16px;
    text-align: center;
}

.legend p {
    height: 16px;
    padding-right: 1px;
    display: flex;
    justify-content: space-between;
    white-space: nowrap;
}

.legend b {
    margin-left: auto;
    font: 11px/16px "DejaVu Sans", sans-serif;
}

.up {
    display: inline-block;
    width: 5px;
    height: 11px;
    background: linear-gradient(#f00, #f00) 2px 0 / 1px 100% no-repeat, linear-gradient(#f00, #f00) 1px 2px / 3px 1px no-repeat, linear-gradient(#f00, #f00) 0 3px / 5px 1px no-repeat;
    vertical-align: -2px;
}

.scale,
.plot,
.time-axis {
    background-color: #000;
    overflow: hidden;
}

.plot,
.time-axis {
    width: 100%;
}

.plot {
    height: 100%;
}

.scale text,
.time-axis text {
    fill: #fff;
    font: 11px "DejaVu Sans", sans-serif;
    text-anchor: end;
}

.scale .current {
    fill: #0f0;
}

.time-axis text {
    text-anchor: middle;
}

.time-axis .edge {
    fill: #ff0;
}

.time-axis .selected {
    fill: #000;
}

.plot path,
.plot polyline {
    fill: none;
    stroke-width: 1px;
    shape-rendering: crispEdges;
}

.plot .grid { stroke: #444; }
.plot .cursor { stroke: #5ff; }
.plot .bars { stroke-width: 3px; }

.plot .zero {
    stroke: #c0c0c0;
    stroke-width: 2px;
}

.plot-with-time {
    display: grid;
    grid-template-rows: 122px 18px;
    row-gap: 1px;
}

/* Minute table */
.bottom {
    height: 148px;
    display: flex;
}

.minutes {
    flex-grow: 1;
    overflow: hidden;
}

table {
    width: 710px;
    table-layout: fixed;
    border-collapse: separate;
    border-spacing: 0;
}

th,
td {
    width: 50px;
    height: 16px;
    padding: 0 3px 0 0;
    line-height: 16px;
    border-right: 1px solid #d4d0c8;
    white-space: nowrap;
}

th.mid { width: 66px; }
th.wide { width: 78px; }

th {
    padding: 0 0 0 2px;
    background-color: #d8d2d0;
    border-right-color: #808080;
    border-bottom: 1px solid #808080;
    box-shadow: inset 1px 1px 0 #fff;
    font-weight: normal;
    line-height: 15px;
    text-align: left;
}

td {
    color: #0ff;
    text-align: right;
}

td.red { color: #f00; }
td.white { color: #fff; }

.current-row td {
    background-color: #0080ff;
    border-top: 1px solid #ff0;
    border-bottom: 1px solid #ff0;
    color: #fff;
    line-height: 14px;
}

.scrollbar {
    width: 17px;
    padding: 1px 0;
    background-color: #f6f5ee;
    border-left: 1px solid #fff;
    display: flex;
    flex-direction: column;
    align-items: center;
    justify-content: space-between;
}

.scrollbar button,
.thumb {
    width: 15px;
    height: 16px;
    border: 1px solid #9cb4ec;
    border-radius: 2px;
    background-color: #c4d4fc;
}

.thumb {
    height: 7px;
    margin-top: 62px;
}

.summary {
    width: 451px;
    padding: 1px 6px 0;
}

.summary h3 {
    color: #ffe000;
    font-size: 12px;
    font-weight: normal;
}

.summary dl {
    display: grid;
    grid-template-columns: 87px 90px 134px 96px;
}

.summary dt {
    height: 18px;
    background-color: #d8d2d0;
    border: 1px solid #fff;
    border-color: #fff #808080 #808080 #fff;
    text-align: center;
}

.summary dt:nth-of-type(even) {
    margin-left: 47px;
}

.summary dd {
    height: 18px;
    line-height: 18px;
    color: #0ff;
    text-align: right;
}

/* Notes drawn over the panels */
.mark {
    position: absolute;
    left: 9px;
    top: 464px;
    width: 714px;
    height: 164px;
    border: 2px solid #f0f;
    border-radius: 10px;
}

.note {
    position: absolute;
    left: 736px;
    top: 508px;
    width: 127px;
    height: 88px;
    padding-right: 18px;
    background-color: #fff;
    color: #f0f;
    font: 300 27px/27px "Noto Sans CJK TC", sans-serif;
}

/* Status bar */
.statusbar {
    height: 22px;
    padding-right: 2px;
    display: flex;
    justify-content: flex-end;
    gap: 2px;
    background: linear-gradient(#fff 2px, #000 2px, #000 3px, #ece9d8 3px);
    white-space: nowrap;
}

.cell {
    height: 18px;
    margin-top: 4px;
    padding-left: 1px;
    border: 1px solid #aca899;
    border-color: #aca899 #fff #fff #aca899;
}

.cell.guest,
.cell.layout {
    width: 106px;
}

.cell.clock { width: 156px; }

.cell.brand {
    width: 68px;
    font: bold 13px/16px Lato, sans-serif;
    letter-spacing: 2px;
}

.brand em {
    font-style: normal;
    color: #a01010;
}

.cell.blank { width: 20px; }

.cell.lamp {
    width: 21px;
    padding: 0;
    border: none;
}
```
